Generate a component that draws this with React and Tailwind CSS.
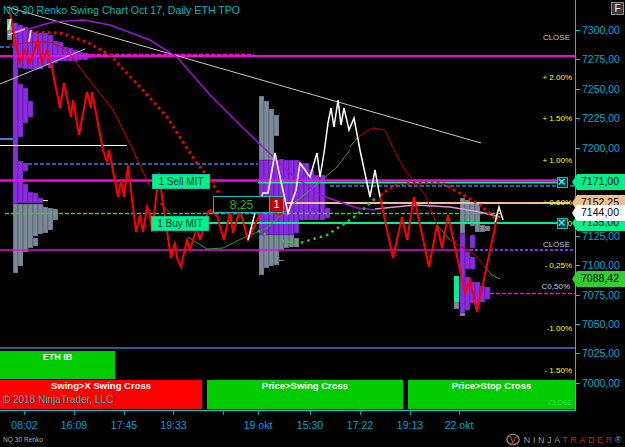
const PURPLE = "#8a2be2";
const GRAY = "#7a8a9a";

const pricesTop = ["7300,00", "7275,00", "7250,00", "7225,00", "7200,00", "", "", "7125,00", "7100,00", "7075,00", "7050,00", "7025,00", "7000,00"];

const times = [
  { w: 49, t: "08:02" },
  { w: 50, t: "16:09" },
  { w: 50, t: "17:45" },
  { w: 49, t: "19:33" },
  { w: 50, t: "" },
  { w: 20, t: "19 okt" },
  { w: 84, t: "15:30" },
  { w: 16, t: "17:22" },
  { w: 84, t: "19:13" },
  { w: 14, t: "22 okt" },
];

const purpleBars = [
  [13, 23, 204], [18, 25, 68], [18, 84, 137], [18, 161, 203], [23, 27, 69], [23, 88, 123], [23, 163, 171], [23, 184, 203],
  [28, 30, 69], [28, 101, 117], [28, 192, 203], [33, 32, 69], [33, 193, 203], [38, 33, 69], [38, 198, 203], [43, 33, 65],
  [48, 35, 68], [53, 41, 63], [58, 42, 61], [63, 47, 61], [68, 48, 61], [73, 50, 61], [78, 52, 60], [83, 53, 60], [88, 54, 58],
  [259, 160, 235], [264, 160, 235], [269, 160, 235], [274, 160, 235], [279, 159, 235], [284, 160, 235], [289, 160, 235],
  [294, 160, 233], [299, 163, 220], [304, 163, 220], [309, 170, 220], [314, 175, 220], [320, 175, 220], [325, 208, 218],
  [460, 233, 313], [465, 252, 269], [465, 277, 310], [470, 235, 248], [470, 257, 269], [470, 282, 303], [475, 282, 305], [480, 286, 302], [485, 287, 299],
];

const grayBars = [
  [13, 204, 273], [18, 204, 266], [23, 204, 252], [28, 204, 248], [33, 204, 236], [33, 238, 246], [38, 204, 234], [43, 207, 233], [48, 208, 230], [53, 209, 220],
  [259, 96, 160], [264, 101, 160], [269, 109, 160], [274, 115, 136],
  [259, 235, 275], [264, 235, 268], [269, 235, 266], [274, 235, 265], [279, 235, 250], [284, 235, 248], [289, 235, 247], [294, 238, 247],
  [460, 198, 233], [465, 200, 222], [470, 202, 226], [475, 203, 232], [480, 225, 232], [485, 226, 231], [460, 313, 316], [7, 30, 40], [454, 302, 309],
];

const redPrice = "10,13 15,40 20,63 25,50 30,63 38,40 42,63 47,50 52,68 60,108 64,83 71,117 73,100 79,135 87,92 91,108 92,92 103,150 107,162 109,150 118,197 121,180 124,197 128,165 136,232 140,215 143,232 147,207 150,215 152,232 159,173 162,197 171,258 175,242 177,258 181,267 187,240 190,250 197,227 200,240 208,212 210,210 217,216 224,240 230,212 233,233 240,210 248,240 262,210 280,215 290,205",
  redPrice2 = "380,197 393,258 402,217 407,240 414,197 429,267 437,225 442,248 448,215 465,293 470,280 477,312 498,213";

const thinRed = "10,45 33,42 50,42 67,50 87,77 113,110 133,150 150,187";
const thinRed2 = "160,203 172,215";
const thinGreen = "188,237 207,249 223,248 243,238 267,228 283,213 310,190 337,167 350,150";
const thinGreen2 = "350,147 357,138";
const thinRed3 = "357,138 372,128 385,130 394,150 405,170 425,195 437,225";
const thinRed4 = "450,240 475,255 485,267";
const thinGreen3 = "437,225 450,240";
const thinGreen4 = "485,267 492,275 500,279";

const purpleCurve = "25,30 53,22 83,20 110,25 150,40 177,57 210,95 243,128 264,148 290,173 320,195 357,208 375,210";
const pinkCurve = "375,209 415,205 450,207 480,212 500,217";

const redDots = "30,32 60,33 87,42 110,55 140,87 167,117 188,150 197,163 210,180 220,195";
const redDots2 = "380,195 395,185 415,183 442,183 458,192 480,205 497,220";
const greenDots = "252,228 280,241 300,243 327,235 353,218 377,197";

// one bar of a TPO profile
const Bars = ({ data, fill }) =>
  data.map(([x, y1, y2], i) => (
    <rect key={i} x={x} y={y1} width={5} height={y2 - y1} fill={fill} stroke="#000" strokeOpacity="0.4" strokeWidth="0.5" />
  ));

const Chart = () => (
  <svg className="absolute inset-0" width="575" height="410" viewBox="0 0 575 410" fill="none">
    <Bars data={purpleBars} fill={PURPLE} />
    <Bars data={grayBars} fill={GRAY} />
    <rect x="7" y="19" width="5" height="11" fill="#4fdc7a" />
    <rect x="454" y="276" width="5" height="26" fill="#00f08c" />

    <path d="M0 56H575" stroke="#ff00e0" strokeWidth="2" />
    <path d="M85 54.5H254" stroke="#ff00e0" strokeWidth="1.5" strokeDasharray="4 2" />
    <path d="M0 47H13" stroke="#3a7fe0" strokeWidth="1.5" strokeDasharray="4 2" />
    <path d="M0 139H13" stroke="#3a7fe0" strokeWidth="2" />
    <path d="M0 145.5H127" stroke="#fff" strokeWidth="1" />
    <path d="M28 164H258" stroke="#3a7fe0" strokeWidth="1.5" strokeDasharray="4 2" />
    <path d="M330 186H575" stroke="#3a7fe0" strokeWidth="1.5" strokeDasharray="4 2" />
    <path d="M258 182.5H560" stroke="#00f08c" strokeWidth="2" />
    <path d="M0 180.5H560" stroke="#ff00e0" strokeWidth="2.5" />
    <path d="M285 203H570" stroke="#f0c090" strokeWidth="2" />
    <path d="M5 213.5H500" stroke="#33cc33" strokeWidth="1.5" strokeDasharray="4 2" />
    <path d="M150 223H560" stroke="#00f08c" strokeWidth="2" />
    <path d="M0 250H470" stroke="#e010d0" strokeWidth="1.5" />
    <path d="M470 250H575" stroke={PURPLE} strokeDasharray="3 2" strokeWidth="2" />
    <path d="M490 293.5H575" stroke="#ff00e0" strokeWidth="1.5" strokeDasharray="4 2" />
    <path d="M0 348H575" stroke="#4a70c8" strokeWidth="1.5" />
    <path d="M43 200.5H48" stroke="#ffff00" />
    <path d="M279 260.5H284" stroke="#8a8a00" />

    <path d="M7 7L481 143" stroke="#c8c8c8" />
    <path d="M0 84L85 49" stroke="#c8c8c8" />
    <path d="M8 35L25 29" stroke="#ffc0e0" strokeWidth="1.5" />

    <polyline points={thinRed} stroke="#e00000" />
    <polyline points={thinRed2} stroke="#e00000" />
    <polyline points={thinRed3} stroke="#c00000" />
    <polyline points={thinRed4} stroke="#c00000" />
    <polyline points={thinGreen} stroke="#2e9e2e" />
    <polyline points={thinGreen2} stroke="#2e9e2e" />
    <polyline points={thinGreen3} stroke="#2e9e2e" />
    <polyline points={thinGreen4} stroke="#2e9e2e" />

    <polyline points={purpleCurve} stroke="#a010e0" strokeWidth="1.5" />
    <polyline points={pinkCurve} stroke="#e090e0" strokeWidth="1.5" />

    <polyline points={redDots} stroke="#f00000" strokeWidth="3" strokeDasharray="2.5 3.5" />
    <polyline points={redDots2} stroke="#f00000" strokeWidth="3" strokeDasharray="2.5 3.5" />
    <polyline points={greenDots} stroke="#22cc22" strokeWidth="2.5" strokeDasharray="2.5 4" />

    <polyline points={redPrice} stroke="#ff0000" strokeWidth="2" />
    <polyline points={redPrice2} stroke="#ff0000" strokeWidth="2" />
    <polyline points="248,240 255,213 263,193 268,193 275,153 280,177 288,213 296,190 300,163 310,177 317,153 320,177 324,153 328,123 331,108 334,127 338,100 341,125 344,108 349,130 354,118 360,150 370,197 375,170 380,197" stroke="#fff" strokeWidth="1.5" />
    <polyline points="495,222 499,207 503,220" stroke="#fff" strokeWidth="1.5" />
    <path d="M8 30L11 19M29 42L31 30" stroke="#fff" strokeWidth="1.5" />
  </svg>
);

const XBox = ({ className }) => (
  <div className={"absolute w-[11px] h-[11px] border border-[#00c0c8] bg-[#003a40] " + className}>
    <svg viewBox="0 0 11 11" width="9" height="9" fill="none">
      <path d="M1 1L8 8M8 1L1 8" stroke="#30e8f0" strokeWidth="2" />
    </svg>
  </div>
);

const Tag = ({ top, bg, children }) => (
  <div
    className={"absolute right-0 w-[53px] h-4 flex items-center justify-end pr-[6px] text-[10.5px] text-black [clip-path:polygon(5px_0,100%_0,100%_100%,5px_100%,0_50%)] " + top + " " + bg}
  >
    {children}
  </div>
);

const Pct = ({ className, children }) => (
  <span className={"absolute right-[3px] text-[8px] leading-none text-[#ffff00] " + className}>{children}</span>
);

const CloseTxt = ({ className, children }) => (
  <span className={"absolute right-[5px] text-[8px] leading-none text-[#c0c8e0] " + className}>{children}</span>
);

const MitLabel = ({ left, top, children }) => (
  <div className={"absolute w-[58px] h-[15px] bg-[#00f08c] border border-[#00c8a0] flex items-center justify-center text-[10px] text-[#0a3a2a] " + left + " " + top}>
    {children}
  </div>
);

const Logo = () => (
  <svg width="14" height="13" viewBox="0 0 15 13" fill="none">
    <ellipse cx="7.5" cy="6.5" rx="6.5" ry="5.5" stroke="#8a8a8a" strokeWidth="1.5" />
    <path d="M3 2Q7 5 7 12M7 11Q9 6 12 2" stroke="#b03020" strokeWidth="1.5" />
  </svg>
);

export default function App() {
  return (
    <div className="relative w-[625px] h-[447px] bg-black overflow-hidden font-['Liberation_Sans',sans-serif]">
      <div className="flex h-[411px]">
        {/* price pane */}
        <div className="relative w-[575px] border-b border-[#00c8d0] flex flex-col justify-end pb-px">
          <Chart />
          <div className="absolute left-[3px] top-[3px] text-[10.6px] leading-[14px] text-[#00b8b8]">
            NQ 30 Renko Swing Chart Oct 17, Daily ETH TPO
          </div>

          <CloseTxt className="top-[34px]">CLOSE</CloseTxt>
          <Pct className="top-[74px]">+ 2.00%</Pct>
          <Pct className="top-[115px]">+ 1.50%</Pct>
          <Pct className="top-[157px]">+ 1.00%</Pct>
          <Pct className="top-[199px]">+ 0.50%</Pct>
          <Pct className="top-[220px]">+ 0</Pct>
          <CloseTxt className="top-[241px]">CLOSE</CloseTxt>
          <Pct className="top-[262px]">- 0,25%</Pct>
          <CloseTxt className="top-[283px]">C0,50%</CloseTxt>
          <Pct className="top-[325px]">-1.00%</Pct>
          <Pct className="top-[367px]">- 1.50%</Pct>

          <MitLabel left="left-[152px]" top="top-[174px]">1 Sell MIT</MitLabel>
          <MitLabel left="left-[151px]" top="top-[216px]">1 Buy MIT</MitLabel>

          <div className="absolute left-[213px] top-[196px] h-[17px] w-[71px] flex border border-[#00c0c8]">
            <div className="w-[55px] bg-black flex items-center justify-center text-[12px] text-[#22b022]">8,25</div>
            <div className="flex-1 bg-[#c00000] border-l border-[#00c0c8] flex items-center justify-center text-[11px] text-white">1</div>
          </div>

          <XBox className="left-[557px] top-[177px]" />
          <XBox className="left-[557px] top-[218px]" />

          {/* signal strips */}
          <div className="relative w-[115px] h-[28px] mb-px bg-[#00cc00] text-center text-[9px] font-bold leading-[13px] text-white">ETH IB</div>
          <div className="relative flex gap-[5px] h-[29px] text-center text-[9.5px] font-bold leading-[12px] text-white">
            <div className="w-[202px] bg-[#ff0000] flex flex-col">
              <span>Swing&gt;X Swing Cross</span>
              <span className="pl-[3px] pt-[2px] text-left text-[10px] font-normal text-[#20b0c0]">© 2018 NinjaTrader, LLC</span>
            </div>
            <div className="w-[196px] bg-[#00cc00]">Price&gt;Swing Cross</div>
            <div className="relative flex-1 bg-[#00cc00]">
              Price&gt;Stop Cross
              <span className="absolute right-[3px] bottom-0 text-[7px] font-normal text-[#30e050]">CLOSE</span>
            </div>
          </div>
        </div>

        {/* price axis */}
        <div className="relative w-[50px] border-l border-[#00c8d0] pt-[23px]">
          <div className="flex flex-col">
            {pricesTop.map((p, i) => (
              <div key={i} className="flex h-[29.4px] items-start gap-[2px] text-[10.5px] leading-[14px] text-[#00a8c8]">
                {p && <span className="mt-[7px] w-[4px] h-px bg-[#00c8d0]" />}
                {p}
              </div>
            ))}
          </div>
        </div>
      </div>

      {/* time axis */}
      <div className="flex w-[575px]">
        {times.map((c, i) => (
          <div key={i} className="flex flex-col items-center" style={{ width: c.w }}>
            <span className="w-px h-[4px] bg-[#00a0a8]" />
            <span className="mt-[3px] whitespace-nowrap text-[10.5px] leading-[14px] text-[#00a0d0]">{c.t}</span>
          </div>
        ))}
      </div>

      <div className="flex items-center justify-between pl-[3px] pr-[1px] mt-[1px]">
        <span className="text-[6.6px] leading-[10px] text-[#b0b0b0]">NQ 30 Renko</span>
        <div className="flex items-center gap-[4px]">
          <Logo />
          <span className="text-[9px] leading-[10px] tracking-[2.6px]">
            <span className="text-[#9a9a9a]">NINJA</span>
            <span className="text-[#b03020]">TRADER</span>
            <span className="text-[#9a9a9a]">®</span>
          </span>
        </div>
      </div>

      {/* overlays */}
      <div className="absolute right-[1px] top-[2px] w-[13px] h-[13px] bg-[#3a3a3a] border border-[#8a8a8a] flex items-center justify-center text-[10px] leading-none text-white">F</div>
      <Tag top="top-[174px]" bg="bg-[#00f08c]">7171,00</Tag>
      <Tag top="top-[195px]" bg="bg-[#f0c090]">7152,25</Tag>
      <Tag top="top-[215px]" bg="bg-[#00f08c]">7135,00</Tag>
      <Tag top="top-[205px]" bg="bg-white">7144,00</Tag>
      <Tag top="top-[271px]" bg="bg-[#33cc33]">7088,42</Tag>
    </div>
  );
}
